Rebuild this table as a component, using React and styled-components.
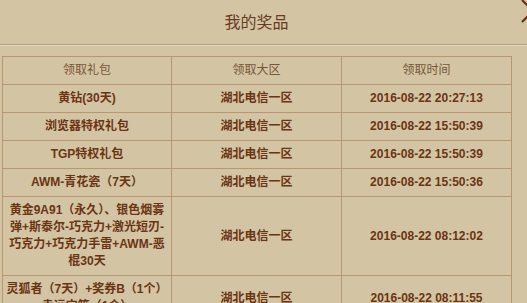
import React from "react";
import styled, { createGlobalStyle } from "styled-components";

const GlobalStyle = createGlobalStyle`
  html, body {
    margin: 0;
    padding: 0;
    background: #d3c5a4;
  }
  body {
    font-family: "Liberation Sans", "Noto Sans CJK SC", sans-serif;
    overflow: hidden;
  }
`;

const Panel = styled.div`
  position: relative;
  width: 527px;
  height: 303px;
  background: #d3c5a4;
  overflow: hidden;
`;

const Header = styled.div`
  height: 45px;
  display: flex;
  align-items: center;
  justify-content: center;
  padding: 0 14px 3px 0;
  box-sizing: border-box;
  border-bottom: 1px solid #b3a183;
  box-shadow: 0 1px 0 #e4d9bf;
`;

const Title = styled.h2`
  margin: 0;
  font-family: "Noto Sans CJK SC", sans-serif;
  font-weight: normal;
  font-size: 16px;
  color: #6a3b1f;
`;

const Close = styled.svg`
  position: absolute;
  left: 521px;
  top: -1px;
`;

const Table = styled.table`
  margin: 11px 0 0 2px;
  border-collapse: collapse;
  table-layout: fixed;
  width: 510px;
  font-size: 12px;
  line-height: 17px;
`;

const Head = styled.th`
  font-weight: normal;
  color: #7a5536;
  border: 1px solid #b8966f;
  padding: 5px 3px;
  text-align: center;
`;

const Cell = styled.td`
  font-weight: bold;
  color: #6b3413;
  border: 1px solid #b8966f;
  padding: 5px 3px;
  text-align: center;
  vertical-align: middle;
`;

const rows = [
  ["黄钻(30天)", "湖北电信一区", "2016-08-22 20:27:13"],
  ["浏览器特权礼包", "湖北电信一区", "2016-08-22 15:50:39"],
  ["TGP特权礼包", "湖北电信一区", "2016-08-22 15:50:39"],
  ["AWM-青花瓷（7天）", "湖北电信一区", "2016-08-22 15:50:36"],
  [
    "黄金9A91（永久）、银色烟雾弹+斯泰尔-巧克力+激光短刃-巧克力+巧克力手雷+AWM-恶棍30天",
    "湖北电信一区",
    "2016-08-22 08:12:02",
  ],
  ["灵狐者（7天）+奖券B（1个）幸运宝箱（1个）", "湖北电信一区", "2016-08-22 08:11:55"],
];

export default function App() {
  return (
    <Panel>
      <GlobalStyle />
      <Header>
        <Title>我的奖品</Title>
      </Header>
      <Close width="24" height="24" viewBox="0 0 24 24">
        <path d="M1 1 L23 23 M1 23 L23 1" stroke="#6b2a10" strokeWidth="2" fill="none" />
      </Close>
      <Table>
        <colgroup>
          <col style={{ width: 169 }} />
          <col style={{ width: 170 }} />
          <col style={{ width: 170 }} />
        </colgroup>
        <thead>
          <tr>
            <Head>领取礼包</Head>
            <Head>领取大区</Head>
            <Head>领取时间</Head>
          </tr>
        </thead>
        <tbody>
          {rows.map((r, i) => (
            <tr key={i}>
              <Cell>{r[0]}</Cell>
              <Cell>{r[1]}</Cell>
              <Cell>{r[2]}</Cell>
            </tr>
          ))}
        </tbody>
      </Table>
    </Panel>
  );
}
